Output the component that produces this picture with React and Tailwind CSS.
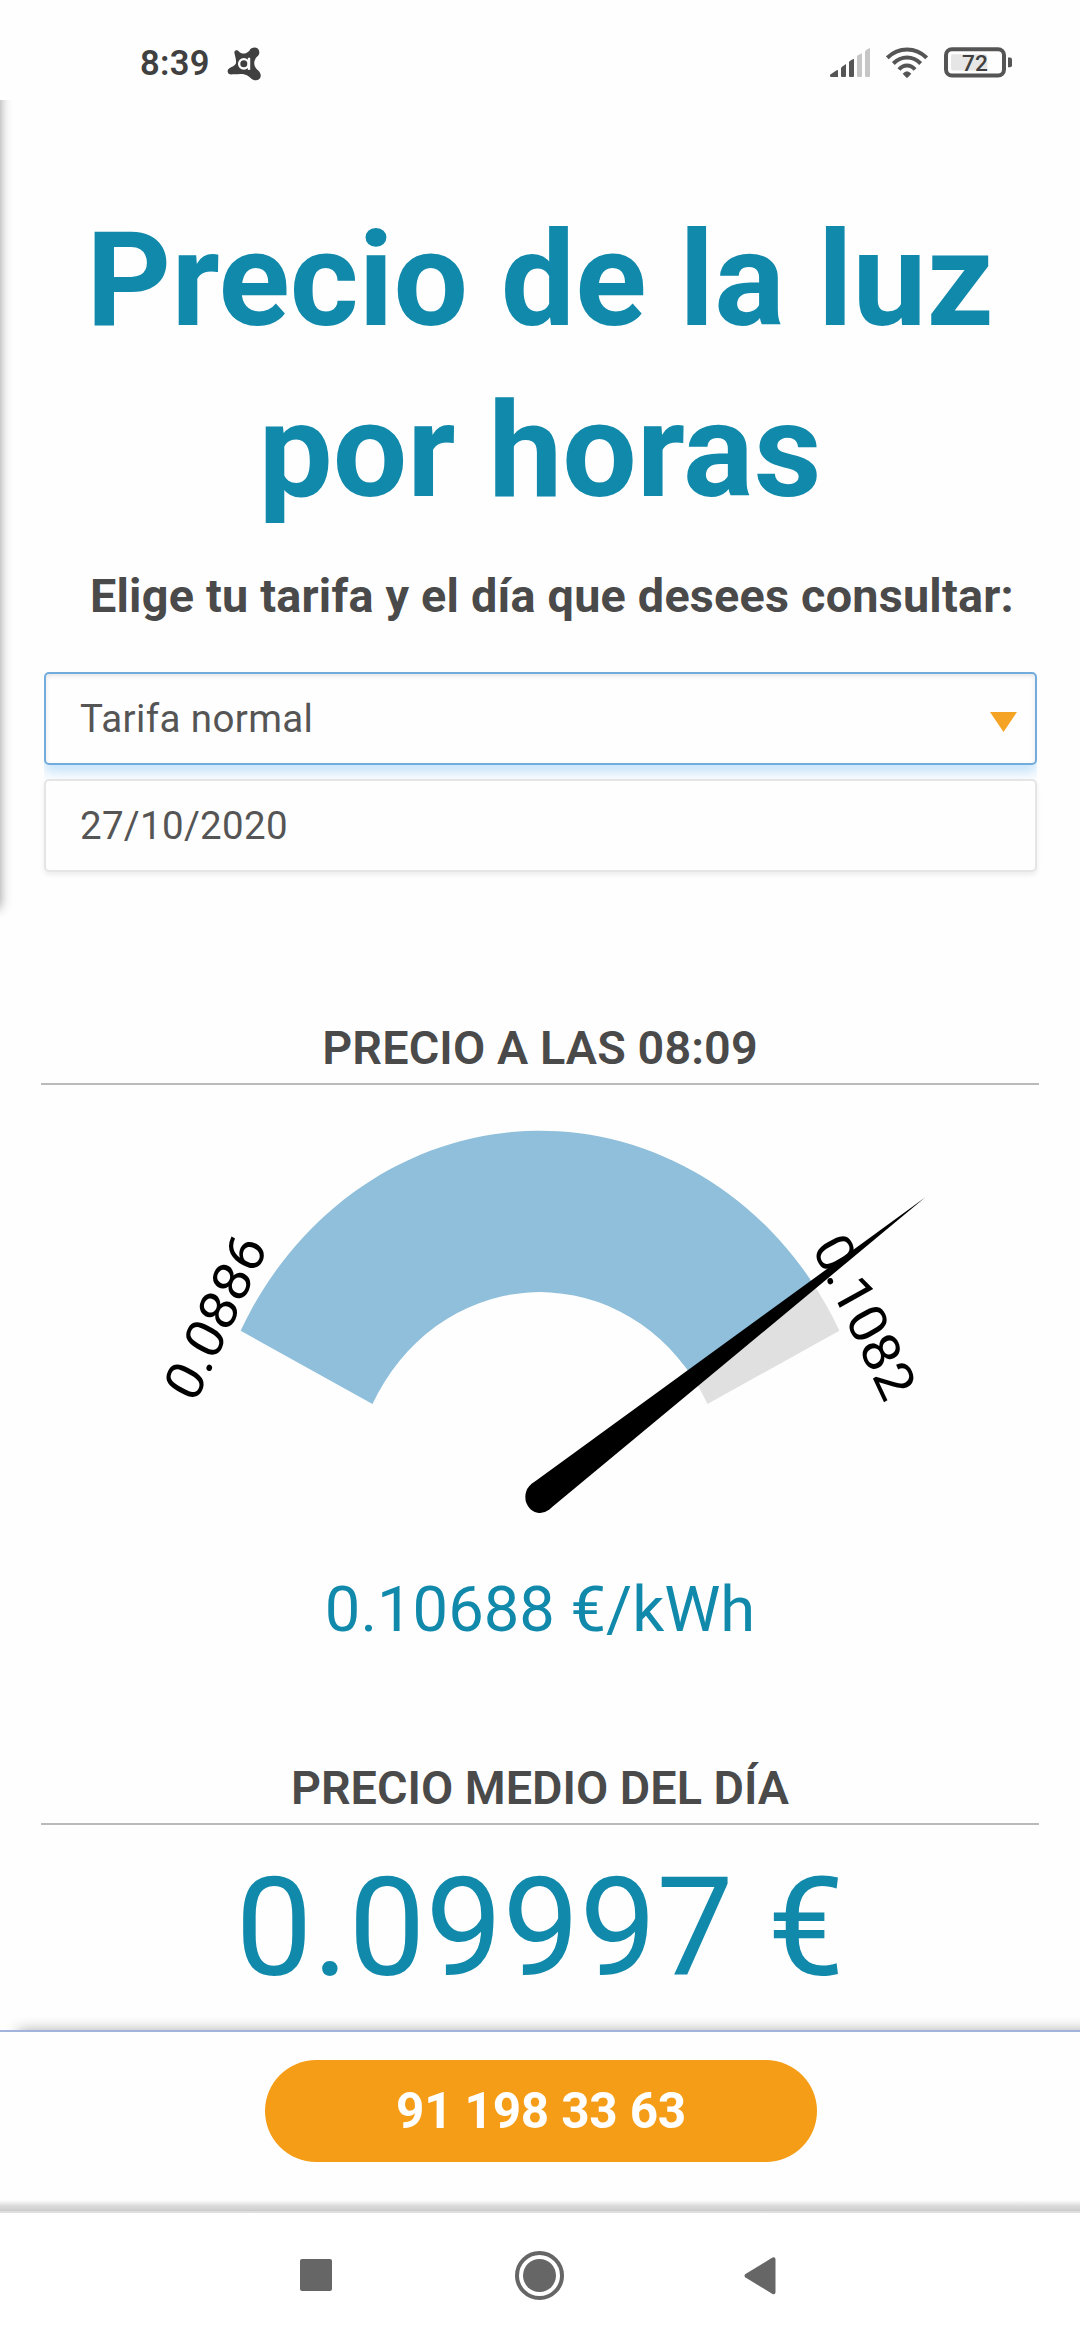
import React from "react";

function AntivirusIcon() {
  return (
    <svg viewBox="0 0 110 110" className="ml-4 mt-[6px] h-[37px] w-[37px]">
      <path
        fill="#404040"
        d="M25 24C24 15 33 13 39 20C46 28 62 27 70 16C76 4 98 4 99 21C100 31 92 34 87 42C81 52 84 65 94 74C108 84 106 104 90 105C78 106 72 95 62 90C50 84 38 87 22 87C10 89 4 84 5 76C8 66 24 66 29 56C32 48 27 34 25 24Z"
      />
      <circle cx="53" cy="56" r="14" fill="none" stroke="#fff" strokeWidth="7" />
      <rect x="65" y="38" width="7" height="36" fill="#fff" />
    </svg>
  );
}

function SignalIcon() {
  return (
    <svg viewBox="90 81 120 87" className="h-[29px] w-10">
      <g fill="#555">
        <path d="M90 161L110 148Q114 146 114 150V168H94Q90 168 90 164Z" />
        <path d="M123 141Q123 138 138 129V165Q138 168 135 168H126Q123 168 123 165Z" />
        <path d="M147 123Q147 120 162 113V165Q162 168 159 168H150Q147 168 147 165Z" />
      </g>
      <g fill="#c6c6c6">
        <path d="M171 107Q171 103 186 97V165Q186 168 183 168H174Q171 168 171 165Z" />
        <path d="M195 92Q195 88 210 81V165Q210 168 207 168H198Q195 168 195 165Z" />
      </g>
    </svg>
  );
}

function WifiIcon() {
  return (
    <svg viewBox="258 80 126 92" className="ml-4 h-[31px] w-[42px]">
      <g fill="none" stroke="#555" strokeWidth="12">
        <path d="M262 112Q287 87 321 87Q355 87 380 112" />
        <path d="M280 129Q298 111 321 111Q344 111 362 129" />
        <path d="M297 147Q307 135 321 135Q335 135 345 147" />
      </g>
      <path fill="#555" d="M308 160Q321 144 334 160L324 170Q321 173 318 170Z" />
    </svg>
  );
}

function BatteryIcon() {
  return (
    <svg viewBox="432 80 204 92" className="ml-4 h-[31px] w-[68px]">
      <rect x="438" y="86" width="174" height="79" rx="18" fill="none" stroke="#555" strokeWidth="12" />
      <rect x="453" y="101" width="109" height="49" rx="6" fill="#e6e6e6" />
      <path fill="#555" d="M624 111H630Q636 111 636 117V134Q636 140 630 140H624Z" />
      <text x="525" y="152" textAnchor="middle" fontFamily="Roboto, sans-serif" fontWeight="500" fontSize="68" fill="#404040">
        72
      </text>
    </svg>
  );
}

function StatusBar() {
  return (
    <header className="flex h-[100px] shrink-0 items-start justify-between pl-[140px] pr-[68px] pt-[39px]">
      <div className="flex">
        <span className="text-[34.5px] font-semibold leading-[48px] tracking-[0.3px] text-[#404040]">8:39</span>
        <AntivirusIcon />
      </div>
      <div className="flex items-center pt-2">
        <SignalIcon />
        <WifiIcon />
        <BatteryIcon />
      </div>
    </header>
  );
}

function SectionTitle({ children }) {
  return (
    <h2 className="mx-[41px] border-b-2 border-[#b9bbba] pb-[5px] text-center text-[46.75px] font-semibold leading-[60px] text-[#4a4a4a]">
      {children}
    </h2>
  );
}

// Gauge drawn in its own units, then stretched vertically around the pivot.
function Gauge() {
  const point = (radius, degrees) => {
    const a = (degrees * Math.PI) / 180;
    return `${radius * Math.cos(a)} ${-radius * Math.sin(a)}`;
  };
  const band = (from, to) =>
    `M${point(336, from)}A336 336 0 0 1 ${point(336, to)}L${point(188, to)}A188 188 0 0 0 ${point(188, from)}Z`;
  const start = 153;
  const end = 27;
  const value = 35.5;
  return (
    <svg viewBox="0 0 1080 484" className="block h-[484px] w-full">
      <g transform="translate(540 412) scale(1 1.09)">
        <path d={band(start, value)} fill="#8fbfda" />
        <path d={band(value, end)} fill="#e0e0e0" />
        <g fontFamily="Roboto, sans-serif" fontSize="52.5" textAnchor="middle" fill="#000">
          <text transform="rotate(-63)" y="-346">0.0886</text>
          <text transform="rotate(63)" y="-346">0.1082</text>
        </g>
        <g transform="rotate(-35.5)">
          <circle r="14.700" />
          <path d="M0 -14.700L473 0L0 14.700Z" />
        </g>
      </g>
    </svg>
  );
}

function PhoneBar() {
  return (
    <div className="relative z-10 flex h-[183px] shrink-0 flex-col items-center border-t-2 border-[#a3b4dc] bg-[#fefefe] pt-7">
      <div className="absolute -top-[18px] left-0 right-0 h-4 overflow-hidden">
        <div className="absolute -right-5 left-[18px] top-4 h-5 shadow-[0_0_14px_rgba(0,0,0,0.32)]" />
      </div>
      <button className="ml-[2px] h-[102px] w-[552px] rounded-full bg-[#f59d17] text-[49.5px] font-bold tracking-[-0.2px] text-white">
        91 198 33 63
      </button>
      <div className="absolute bottom-[2px] left-0 right-0 h-[11px] bg-gradient-to-t from-[#cbcbcb] via-[#dddddd] to-transparent" />
      <div className="absolute bottom-0 left-0 right-0 h-[2px] bg-[#dedede]" />
    </div>
  );
}

function NavigationBar() {
  return (
    <nav className="flex h-[127px] shrink-0 items-start bg-white pl-[300px] pt-[38px]">
      <span className="mt-2 h-8 w-8 rounded-[2px] bg-[#666]" />
      <span className="ml-[183px] flex h-[49px] w-[49px] items-center justify-center rounded-full border-4 border-[#666]">
        <span className="h-[33px] w-[33px] shrink-0 rounded-full bg-[#666]" />
      </span>
      <svg viewBox="0 0 32 38" className="ml-[180px] mt-[6px] h-[38px] w-8">
        <path d="M1.500 17L28.500 0.500Q31.500 -0.500 31.500 2.500V35Q31.500 38 28.500 37L1.500 20.500Q-0.500 18.700 1.500 17Z" fill="#666" />
      </svg>
    </nav>
  );
}

export default function App() {
  return (
    <div className="relative flex h-[2340px] w-[1080px] flex-col overflow-hidden bg-[#fefefe] font-['Roboto',sans-serif]">
      <StatusBar />
      <main className="relative grow overflow-hidden pt-[95px]">
        <div className="absolute -left-5 -top-5 h-[828px] w-5 shadow-[0_0_12px_rgba(0,0,0,0.42)]" />
        <h1 className="text-center text-[132px] font-bold leading-[171px] text-[#1189ab]">
          Precio de la luz
          <br />
          por horas
        </h1>
        <p className="mt-[29px] whitespace-nowrap pl-[90px] text-[46.75px] font-bold leading-[60px] tracking-[0.22px] text-[#4a4a4a]">
          Elige tu tarifa y el día que desees consultar:
        </p>
        <form className="ml-[44px] mr-[43px] mt-[46px] flex flex-col gap-[14px] text-[38.5px] text-[#555]">
          <div className="flex h-[93px] items-center justify-between rounded-[5px] border-2 border-[#72acdc] bg-[#fefefe] pl-[34px] pr-[18px] shadow-[0_8px_12px_rgba(120,190,245,0.4),inset_0_2px_4px_rgba(0,0,0,0.1)] [clip-path:inset(0_0_-14px_0)]">
            <span className="tracking-[0.38px]">Tarifa normal</span>
            <svg viewBox="0 0 27 20" className="mt-[7px] h-5 w-[27px]">
              <path d="M0 0H27L13.500 20Z" fill="#f4a324" />
            </svg>
          </div>
          <div className="flex h-[93px] items-center rounded-[5px] border-2 border-[#e5e5e5] bg-[#fefefe] pl-[34px] tracking-[0.3px] shadow-[0_3px_5px_rgba(0,0,0,0.07)]">
            27/10/2020
          </div>
        </form>
        <section className="mt-[146px]">
          <SectionTitle>
            <span className="tracking-[0.12px]">PRECIO A LAS 08:09</span>
          </SectionTitle>
          <Gauge />
          <p className="text-center text-[63.25px] leading-[80px] text-[#1189ab]">0.10688 €/kWh</p>
        </section>
        <section className="mt-[109px]">
          <SectionTitle>PRECIO MEDIO DEL DÍA</SectionTitle>
          <p className="mt-[23px] text-center text-[137px] leading-[160px] text-[#1189ab]">0.09997 €</p>
        </section>
      </main>
      <PhoneBar />
      <NavigationBar />
    </div>
  );
}
